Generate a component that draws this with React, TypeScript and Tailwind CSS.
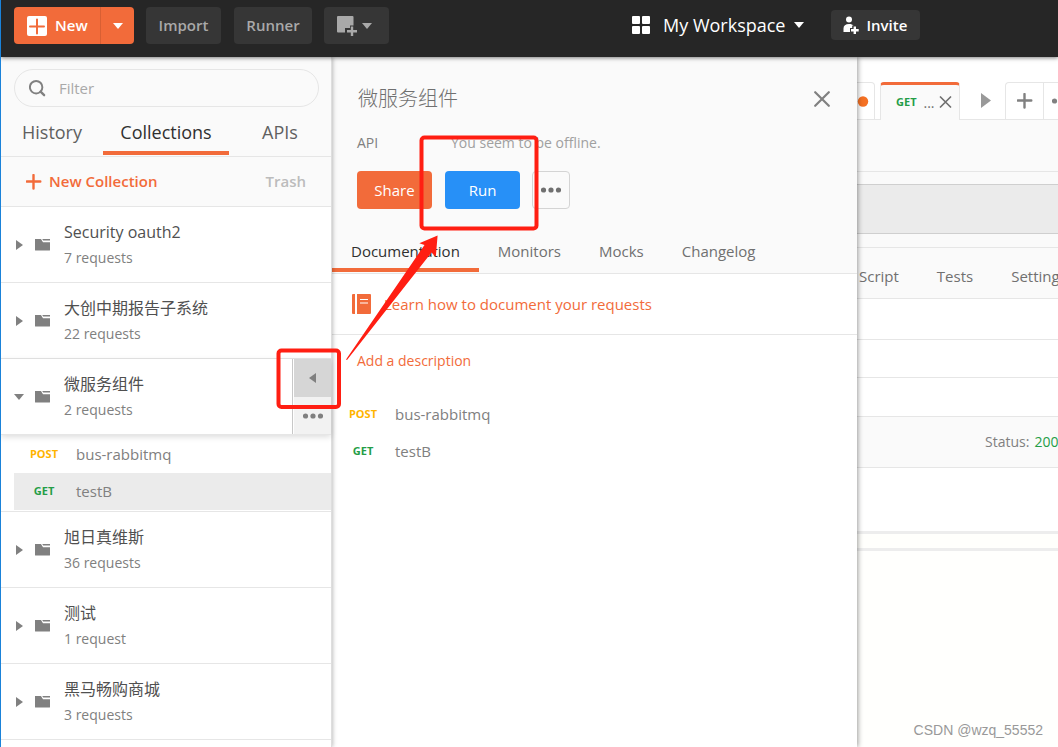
import React from "react";

const collectionsTop = [
  { name: "Security oauth2", count: "7 requests" },
  { name: "大创中期报告子系统", count: "22 requests" },
];

const collectionsBottom = [
  { name: "旭日真维斯", count: "36 requests" },
  { name: "测试", count: "1 request" },
  { name: "黑马畅购商城", count: "3 requests" },
];

function Caret({ className = "" }: { className?: string }) {
  return (
    <svg width="10" height="6" viewBox="0 0 10 6" className={className} aria-hidden="true">
      <path d="M0 0h10L5 6z" fill="currentColor" />
    </svg>
  );
}

function Dots() {
  return (
    <svg width="20" height="6" viewBox="0 0 20 6" fill="currentColor" aria-hidden="true">
      <circle cx="2.5" cy="3" r="2.6" />
      <circle cx="10" cy="3" r="2.6" />
      <circle cx="17.5" cy="3" r="2.6" />
    </svg>
  );
}

function Plus({ className = "" }: { className?: string }) {
  return (
    <svg width="16" height="16" viewBox="0 0 16 16" className={className} aria-hidden="true">
      <path d="M7.500 1v13.500M0.800 7.500h13.500" stroke="currentColor" strokeWidth="2.4" strokeLinecap="round" />
    </svg>
  );
}

function Folder() {
  return (
    <svg width="15" height="12" viewBox="0 0 15 12" fill="currentColor" aria-hidden="true">
      <path d="M0 0h6l2 3.200h7V11a.6.6 0 0 1-.6.6H.6A.6.6 0 0 1 0 11z" />
      <path d="M7.200 0H15v1.600H8.200z" />
    </svg>
  );
}

function Collection({ name, count, open = false }: { name: string; count: string; open?: boolean }) {
  return (
    <button className="flex h-[75px] min-w-0 flex-1 items-center pl-[13px] text-left">
      <span className="flex w-[21px] shrink-0 text-[#808080]">
        {open ? (
          <Caret />
        ) : (
          <svg width="8" height="10" viewBox="0 0 8 10" className="ml-[2px]" aria-hidden="true">
            <path d="M0 0l7 5-7 5z" fill="currentColor" />
          </svg>
        )}
      </span>
      <span className="w-[29px] shrink-0 text-[#808080]">
        <Folder />
      </span>
      <span className="block">
        <span className="block text-base/[26px] text-[#505050]">{name}</span>
        <span className="block text-sm/[26px] text-[#808080]">{count}</span>
      </span>
    </button>
  );
}

function Method({ kind }: { kind: "POST" | "GET" }) {
  return (
    <span className={`w-8 shrink-0 text-center text-[11px] font-bold ${kind === "POST" ? "text-[#ffb400]" : "text-[#249d47]"}`}>
      {kind}
    </span>
  );
}

function Header() {
  return (
    <header className="relative z-20 flex h-[57px] shrink-0 items-start bg-[#262626] pt-[7px] pl-[13px] shadow-[0_1px_4px_rgba(0,0,0,0.5)]">
      <div className="flex h-[37px] shrink-0 overflow-hidden rounded bg-[#f26b3a] text-white">
        <button className="flex w-[87px] items-center gap-2 border-r border-[#d85f33] pl-[13px] text-[15px] font-semibold">
          <svg width="20" height="20" viewBox="0 0 20 20" aria-hidden="true">
            <rect width="20" height="20" rx="2" fill="#fff" />
            <path d="M10 3.4v14M3 10.4h14" stroke="#f26b3a" strokeWidth="2" strokeLinecap="round" />
          </svg>
          New
        </button>
        <button className="flex w-[33px] items-center justify-center" aria-label="More new options">
          <Caret />
        </button>
      </div>
      <button className="ml-3 h-[37px] w-[75px] shrink-0 rounded bg-[#363636] text-[15px] font-semibold text-[#a9a9a9]">Import</button>
      <button className="ml-[13px] h-[37px] w-[78px] shrink-0 rounded bg-[#363636] text-[15px] font-semibold text-[#a9a9a9]">Runner</button>
      <button className="ml-3 flex h-[37px] w-[65px] shrink-0 items-center gap-[5px] rounded bg-[#363636] pl-[13px] text-[#a9a9a9]" aria-label="Open window">
        <svg width="20" height="20" viewBox="0 0 20 20" fill="currentColor" aria-hidden="true">
          <path d="M1 0h14.5a1 1 0 0 1 1 1v8.5H13V12H8v4.5H1a1 1 0 0 1-1-1V1a1 1 0 0 1 1-1z" />
          <path d="M13.800 10.500h2.400v3.600H20v2.400h-3.800V20h-2.400v-3.500H10v-2.400h3.800z" />
        </svg>
        <Caret />
      </button>
      <button className="ml-[243px] flex h-9 shrink-0 items-center text-lg font-medium text-white">
        <svg width="18" height="18" viewBox="0 0 18 18" fill="currentColor" className="mr-[13px]" aria-hidden="true">
          <rect width="8" height="8" rx="1" />
          <rect x="10" width="8" height="8" rx="1" />
          <rect y="10" width="8" height="8" rx="1" />
          <rect x="10" y="10" width="8" height="8" rx="1" />
        </svg>
        My Workspace
        <Caret className="ml-[9px]" />
      </button>
      <button className="mt-[3px] ml-[27px] flex h-[30px] w-[89px] shrink-0 items-center gap-[7px] rounded bg-[#363636] pl-3 text-[15px] font-semibold text-white">
        <svg width="16" height="18" viewBox="0 0 16 18" fill="currentColor" aria-hidden="true">
          <circle cx="6" cy="3.600" r="3" />
          <path d="M0.500 16v-3.500C0.500 9.500 2.500 8 6 8c2.300 0 3.700.5 4.600 1.600H9.200v2.500H7V16z" />
          <path d="M10.600 10.500H13v2.600h2.700v2.300H13V18h-2.400v-2.600H8v-2.300h2.600z" />
        </svg>
        Invite
      </button>
    </header>
  );
}

function Sidebar() {
  return (
    <aside className="relative z-10 w-[331px] shrink-0 border-r border-[#dedede] bg-white shadow-[1px_0_4px_rgba(0,0,0,0.25)]">
      <div className="bg-[#fafafa]">
        <div className="pt-3 pr-3 pl-[13px]">
          <label className="flex h-[38px] items-center rounded-full border border-[#e6e6e6] pl-[14px] text-[#808080]">
            <svg width="19" height="19" viewBox="0 0 19 19" fill="none" stroke="currentColor" aria-hidden="true">
              <circle cx="8" cy="8" r="7" strokeWidth="2.200" />
              <path d="M13 13l4 4" strokeWidth="2.600" strokeLinecap="round" />
            </svg>
            <input aria-label="Filter" placeholder="Filter" className="ml-[13px] w-full min-w-0 bg-transparent pr-4 text-[15px] outline-none placeholder:text-[#a9a9a9]" />
          </label>
        </div>
        <nav className="grid h-[50px] grid-cols-[102px_126px_1fr] border-b border-[#e6e6e6] text-lg text-[#606060]">
          <button className="h-12 pt-[2px]">History</button>
          <button className="h-12 border-b-4 border-[#f26b3a] pt-[6px] text-[#303030]">Collections</button>
          <button className="h-12 pt-[2px]">APIs</button>
        </nav>
        <div className="flex h-[50px] items-center justify-between border-b border-[#e6e6e6] pr-[25px] pl-[25px] text-[15px] font-semibold">
          <button className="flex items-center gap-[7px] text-[#f26b3a]">
            <Plus />
            New Collection
          </button>
          <button className="text-[#bcbcbc]">Trash</button>
        </div>
      </div>
      <ul>
        {collectionsTop.map((c) => (
          <li key={c.name} className="flex border-b border-[#e6e6e6]">
            <Collection {...c} />
          </li>
        ))}
        <li>
          <div className="relative flex border-b border-[#e6e6e6] shadow-[0_2px_6px_rgba(0,0,0,0.14)]">
            <Collection name="微服务组件" count="2 requests" open />
            <div className="flex w-[39px] shrink-0 flex-col border-l border-[#c8c8c8] pl-px text-[#808080]">
              <button className="flex h-[38px] items-center justify-center bg-[#d6d6d6]" aria-label="Close details">
                <svg width="8" height="10" viewBox="0 0 8 10" aria-hidden="true">
                  <path d="M7 0v10L0 5z" fill="currentColor" />
                </svg>
              </button>
              <button className="flex h-[37px] items-center justify-center bg-[#f2f2f2]" aria-label="More actions">
                <Dots />
              </button>
            </div>
          </div>
          <div className="border-b border-[#e6e6e6] pb-px pl-[13px] text-[15px] text-[#808080]">
            <a href="#bus-rabbitmq" className="flex h-[38px] items-center gap-4 pl-[14px]">
              <Method kind="POST" />
              bus-rabbitmq
            </a>
            <a href="#testb" className="flex h-[37px] items-center gap-4 bg-[#ebebeb] pl-[14px]">
              <Method kind="GET" />
              testB
            </a>
          </div>
        </li>
        {collectionsBottom.map((c) => (
          <li key={c.name} className="flex border-b border-[#e6e6e6]">
            <Collection {...c} />
          </li>
        ))}
      </ul>
    </aside>
  );
}

function Details() {
  return (
    <section className="relative z-[5] w-[525px] shrink-0 bg-white shadow-[1px_0_5px_rgba(0,0,0,0.4)]">
      <div className="border-b border-[#e6e6e6] bg-[#fafafa] pt-[27px]">
        <div className="flex h-[30px] items-center justify-between pr-[27px] pl-[26px]">
          <h1 className="text-xl font-light text-[#707070]">微服务组件</h1>
          <button aria-label="Close" className="text-[#808080]">
            <svg width="16" height="16" viewBox="0 0 16 16" aria-hidden="true">
              <path d="M1.200 1.200l13.600 13.600M14.800 1.200L1.200 14.800" stroke="currentColor" strokeWidth="2.200" strokeLinecap="round" />
            </svg>
          </button>
        </div>
        <div className="mt-[19px] flex pl-[25px] text-sm/5">
          <span className="w-[94px] text-[#808080]">API</span>
          <span className="text-[#a0a0a0]">You seem to be offline.</span>
        </div>
        <div className="mt-[18px] flex pl-[25px] text-[15px] font-medium text-white">
          <button className="h-[38px] w-[75px] rounded bg-[#f26b3a]">Share</button>
          <button className="ml-[13px] h-[38px] w-[75px] rounded bg-[#2790f7]">Run</button>
          <button className="ml-3 flex h-[38px] w-[38px] items-center justify-center rounded border border-[#d4d4d4] text-[#707070]" aria-label="More actions">
            <Dots />
          </button>
        </div>
        <nav className="mt-[22px] flex h-[42px] text-[15px] text-[#707070]">
          <button className="h-[41px] border-b-4 border-[#f26b3a] px-[19px] pt-1 text-[#303030]">Documentation</button>
          <button className="h-[41px] px-[19px]">Monitors</button>
          <button className="h-[41px] px-[19px]">Mocks</button>
          <button className="h-[41px] px-[19px]">Changelog</button>
        </nav>
      </div>
      <a href="#learn" className="flex h-[61px] items-center gap-[13px] border-b border-[#e6e6e6] pl-5 text-[15px] font-medium text-[#f26b3a]">
        <svg width="19" height="20" viewBox="0 0 19 20" fill="currentColor" aria-hidden="true">
          <path d="M1 0h2v20H1a1 1 0 0 1-1-1V1a1 1 0 0 1 1-1zM5 0h13a1 1 0 0 1 1 1v18a1 1 0 0 1-1 1H5z" />
          <path d="M8 5.500h8M8 9h8" stroke="#fff" strokeWidth="1.200" />
        </svg>
        Learn how to document your requests
      </a>
      <div className="pt-4 pl-[25px] text-sm/5">
        <button className="text-[#f26b3a]">Add a description</button>
      </div>
      <ul className="mt-[25px] pl-[15px] text-[15px] text-[#808080]">
        <li className="flex h-[37px] items-center gap-4">
          <Method kind="POST" />
          bus-rabbitmq
        </li>
        <li className="flex h-[37px] items-center gap-4">
          <Method kind="GET" />
          testB
        </li>
      </ul>
    </section>
  );
}

function Builder() {
  return (
    <main className="flex min-w-0 flex-1 flex-col overflow-hidden bg-white text-[#707070]">
      <div className="flex h-[63px] shrink-0 items-end">
        <div className="flex h-[38px] w-[18px] shrink-0 items-center rounded-tr border-t border-r border-b border-[#e6e6e6]">
          <svg width="12" height="12" viewBox="0 0 12 12" aria-hidden="true">
            <circle cx="6" cy="6.500" r="5.200" fill="#f47023" />
          </svg>
        </div>
        <div className="h-[38px] w-[5px] shrink-0 border-b border-[#e6e6e6]" />
        <div className="flex h-[38px] w-20 shrink-0 items-center rounded-t border-x border-t-3 border-x-[#e6e6e6] border-t-[#f26b3a] bg-[#fafafa] pl-[15px]">
          <span className="text-[11px] font-bold text-[#249d47]">GET</span>
          <span className="ml-[7px] text-sm">...</span>
          <button aria-label="Close tab" className="ml-1">
            <svg width="13" height="13" viewBox="0 0 13 13" aria-hidden="true">
              <path d="M1.500 1l10 10M11.500 1l-10 10" stroke="currentColor" strokeWidth="1.700" strokeLinecap="round" />
            </svg>
          </button>
        </div>
        <div className="flex h-[38px] w-[45px] shrink-0 items-center justify-center border-b border-[#e6e6e6] pl-[6px]">
          <svg width="10" height="15" viewBox="0 0 10 15" aria-hidden="true">
            <path d="M0 0l10 7.500L0 15z" fill="#999" />
          </svg>
        </div>
        <button aria-label="New tab" className="flex h-[38px] w-[38px] shrink-0 items-center justify-center rounded-tl border-t border-b border-l border-[#e6e6e6] text-[#808080]">
          <Plus />
        </button>
        <button aria-label="Tab options" className="flex h-[38px] min-w-[15px] flex-1 items-center overflow-hidden border-t border-b border-l border-[#e6e6e6] pl-2 text-[#808080]">
          <span className="shrink-0">
            <Dots />
          </span>
        </button>
      </div>
      <div className="h-[52px] shrink-0 border-b border-[#e6e6e6] bg-[#fafafa]" />
      <div className="shrink-0 border-b border-[#e6e6e6] bg-[#fafafa] pt-3 pb-[13px]">
        <div className="h-[50px] border-y border-[#cfcfcf] bg-[#ebebeb]" />
      </div>
      <nav className="flex h-[51px] shrink-0 items-center gap-[38px] border-b border-[#e6e6e6] bg-[#fafafa] pt-[6px] pl-[2px] text-[15px]">
        <button>Script</button>
        <button>Tests</button>
        <button>Settings</button>
      </nav>
      <div className="h-[41px] shrink-0 border-b border-[#e6e6e6]" />
      <div className="h-[38px] shrink-0 border-b border-[#e6e6e6]" />
      <div className="h-[39px] shrink-0 border-b border-[#e6e6e6]" />
      <div className="flex h-[51px] shrink-0 items-center gap-[5px] border-b border-[#e6e6e6] bg-[#fafafa] pl-32 text-sm whitespace-nowrap">
        <span className="text-[#808080]">Status:</span>
        <span className="text-[#249d47]">200</span>
      </div>
      <div className="h-[66px] shrink-0 border-b-3 border-[#ededed]" />
      <div className="h-[17px] shrink-0 border-b-3 border-[#ededed] bg-[#fffffc]" />
      <div className="flex-1 bg-[#fffffd]" />
    </main>
  );
}

function Annotations() {
  return (
    <svg width="620" height="450" viewBox="1 0 620 450" className="pointer-events-none absolute top-0 left-0 z-30" aria-hidden="true">
      <g fill="none" stroke="#ff1e12" strokeWidth="4">
        <rect x="421.500" y="137.500" width="115" height="91" rx="3" />
        <rect x="278.500" y="350.500" width="60.500" height="56.500" rx="3" />
      </g>
      <path d="M437.600 235.600L419.300 243.300L424.500 245L346 359.500L347 360L431.500 252.500L435.800 256.800z" fill="#ff1e12" />
    </svg>
  );
}

export default function App() {
  return (
    <div className="relative flex min-h-screen flex-col overflow-hidden border-l border-[#1a82d9] bg-white font-['Open_Sans','Noto_Sans_CJK_SC',sans-serif]">
      <Header />
      <div className="flex flex-1">
        <Sidebar />
        <Details />
        <Builder />
      </div>
      <Annotations />
      <p className="absolute right-[15px] bottom-[7px] z-30 font-['Liberation_Sans',sans-serif] text-sm/5 text-[#999]">CSDN @wzq_55552</p>
    </div>
  );
}
